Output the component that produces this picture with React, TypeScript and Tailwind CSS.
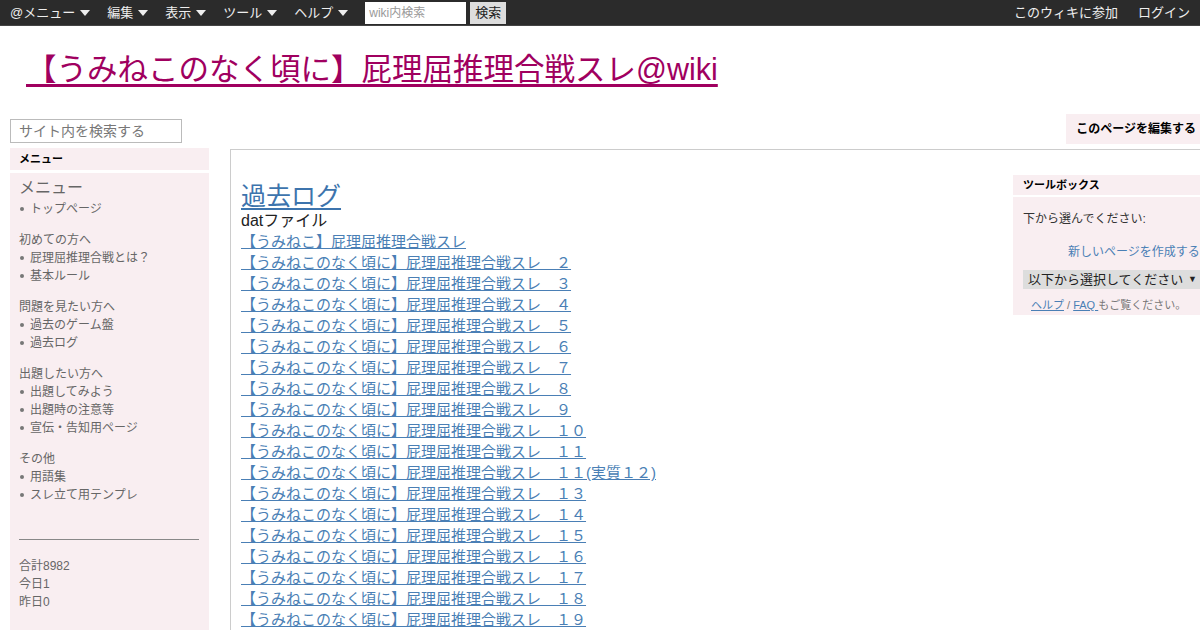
const FONT = "font-['Liberation_Sans','Noto_Sans_CJK_JP',sans-serif]";

type Group = { title?: string; items: string[] };

const MENU: Group[] = [
  { items: ["トップページ"] },
  { title: "初めての方へ", items: ["屁理屈推理合戦とは？", "基本ルール"] },
  { title: "問題を見たい方へ", items: ["過去のゲーム盤", "過去ログ"] },
  { title: "出題したい方へ", items: ["出題してみよう", "出題時の注意等", "宣伝・告知用ページ"] },
  { title: "その他", items: ["用語集", "スレ立て用テンプレ"] },
];

const NUMS = ["２", "３", "４", "５", "６", "７", "８", "９", "１０", "１１", "１１(実質１２)", "１３", "１４", "１５", "１６", "１７", "１８", "１９"];

function Caret() {
  return (
    <svg width="10" height="6" viewBox="0 0 10 6" className="ml-[5px] inline-block">
      <path d="M0 0h10L5 6z" fill="#eeeeee" />
    </svg>
  );
}

function TopBar() {
  const menus = ["@メニュー", "編集", "表示", "ツール", "ヘルプ"];
  return (
    <div className="flex h-[26px] items-center bg-[#2b2b2b] text-[13px] text-[#eeeeee] border-b border-[#444]">
      <div className="flex items-center pl-[10px]">
        {menus.map((m) => (
          <span key={m} className="mr-[17px] flex items-center">
            {m}
            <Caret />
          </span>
        ))}
        <div className="flex h-[22px] w-[101px] items-center bg-white px-[4px] text-[12px] text-[#999]">wiki内検索</div>
        <div className="ml-[4px] flex h-[22px] items-center bg-[#dddddd] px-[5px] text-[13px] text-[#222]">検索</div>
      </div>
      <div className="ml-auto flex items-center gap-[20px] pr-[10px]">
        <span>このウィキに参加</span>
        <span>ログイン</span>
      </div>
    </div>
  );
}

function Sidebar() {
  return (
    <div className="ml-[10px] mt-[5px] w-[199px] shrink-0">
      <div className="flex h-[24px] w-[172px] items-center border border-[#bbb] bg-white px-[8px] text-[14px] text-[#777]">
        サイト内を検索する
      </div>
      <div className="mt-[5px] flex h-[22px] items-center bg-[#f9eef1] px-[9px] text-[11px] font-bold text-black">
        メニュー
      </div>
      <div className="mt-[3px] h-[470px] bg-[#f9eef1] px-[9px] pt-[5px] text-[12px] leading-[18px] text-[#666]">
        <div className="mb-[2px] text-[16px] leading-[20px] text-[#666]">メニュー</div>
        {MENU.map((g, i) => (
          <div key={i} className={i === 0 ? "" : "mt-[13px]"}>
            {g.title && <div>{g.title}</div>}
            <ul>
              {g.items.map((it) => (
                <li key={it} className="flex items-center">
                  <span className="mr-[6px] ml-[1px] inline-block h-[4px] w-[4px] rounded-full bg-[#777]" />
                  {it}
                </li>
              ))}
            </ul>
          </div>
        ))}
        <div className="mt-[35px] border-t border-[#888] mr-[1px]" />
        <div className="mt-[17px]">
          <div>合計8982</div>
          <div>今日1</div>
          <div>昨日0</div>
        </div>
      </div>
    </div>
  );
}

function Toolbox() {
  return (
    <div className="mt-[25px] w-[187px] shrink-0 overflow-hidden whitespace-nowrap">
      <div className="flex h-[20px] items-center bg-[#f9eef1] px-[10px] text-[11px] font-bold text-black">ツールボックス</div>
      <div className="mt-[2px] h-[118px] bg-[#f9eef1] pl-[10px] pt-[12px] text-[12px] text-[#333]">
        <div className="leading-[20px]">下から選んでください:</div>
        <div className="mt-[13px] pl-[45px] leading-[20px] text-[#4a7fb5]">新しいページを作成する</div>
        <div className="mt-[8px] flex h-[19px] w-[177px] items-center justify-between bg-[#dddddd] pl-[5px] pr-[3px] text-[13px] text-[#222]">
          <span>以下から選択してください</span>
          <span className="text-[9px]">▼</span>
        </div>
        <div className="mt-[8px] pl-[8px] text-[11px] leading-[16px] text-[#777]">
          <span className="text-[#4a7fb5] underline">ヘルプ</span> / <span className="text-[#4a7fb5] underline">FAQ </span>もご覧ください。
        </div>
      </div>
    </div>
  );
}

function Content() {
  return (
    <div className="flex-1 pl-[10px] pt-[31px]">
      <div className="text-[25px] leading-[30px] text-[#3d74ad] underline decoration-2 underline-offset-[3px]">過去ログ</div>
      <div className="text-[16px] leading-[20px] text-[#222]">datファイル</div>
      <div className="text-[15px] leading-[21px] text-[#4a7fb5]">
        <div><span className="underline">【うみねこ】屁理屈推理合戦スレ</span></div>
        {NUMS.map((n) => (
          <div key={n}>
            <span className="underline">【うみねこのなく頃に】屁理屈推理合戦スレ　{n}</span>
          </div>
        ))}
      </div>
    </div>
  );
}

export default function App() {
  return (
    <div className={`${FONT} h-[630px] w-[1200px] overflow-hidden bg-white`}>
      <TopBar />
      <div className="h-[88px] pl-[26px] pt-[23px]">
        <span className="text-[30.5px] leading-[40px] text-[#a0005f] underline decoration-[3px] underline-offset-[4px]">
          【うみねこのなく頃に】屁理屈推理合戦スレ@wiki
        </span>
      </div>
      <div className="flex">
        <Sidebar />
        <div className="ml-[21px] flex min-w-0 flex-1 flex-col">
          <div className="flex justify-end">
            <div className="flex h-[30px] items-center bg-[#f9eef1] pl-[10px] pr-[4px] text-[12px] font-bold text-black">このページを編集する</div>
          </div>
          <div className="mt-[5px] flex h-[600px] border-l border-t border-[#cccccc]">
            <Content />
            <Toolbox />
          </div>
        </div>
      </div>
    </div>
  );
}
